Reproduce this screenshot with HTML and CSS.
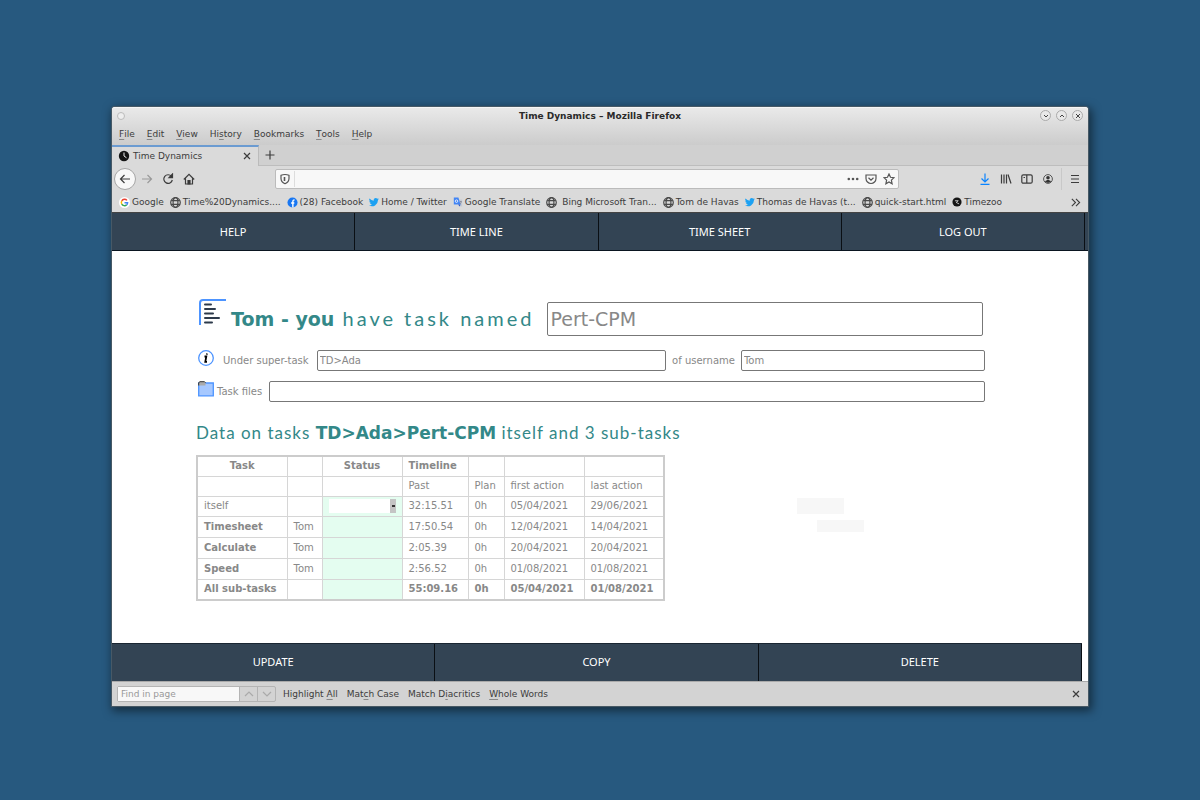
FILE: index.html
```html
<!DOCTYPE html>
<html lang="en">
<head>
    <meta charset="UTF-8">
    <meta name="viewport" content="width=device-width, initial-scale=1.0">
    <title>Time Dynamics</title>
    <link rel="stylesheet" href="styles.css">
</head>
<body>
    <!-- shared icons -->
    <svg class="sprite" aria-hidden="true">
        <symbol id="globe" viewBox="0 0 16 16">
            <g fill="none" stroke="#4a4a4a" stroke-width="1.7">
                <circle cx="8" cy="8" r="7"/>
                <ellipse cx="8" cy="8" rx="3.5" ry="7"/>
                <path d="M1.8 5.3h12.4M1.8 10.7h12.4"/>
            </g>
        </symbol>
        <symbol id="bird" viewBox="0 0 24 24">
            <path fill="#1da1f2" d="M23.6 4.9a9.600 9.600 0 0 1-2.800.8 4.900 4.900 0 0 0 2.100-2.700 9.800 9.800 0 0 1-3.100 1.200 4.900 4.900 0 0 0-8.400 4.500A13.900 13.900 0 0 1 1.300 3.600a4.900 4.900 0 0 0 1.500 6.500 4.800 4.800 0 0 1-2.200-.6 4.900 4.900 0 0 0 3.900 4.900 5 5 0 0 1-2.200.1 4.900 4.900 0 0 0 4.600 3.400A9.800 9.800 0 0 1 0 19.900a13.900 13.900 0 0 0 21.400-12.400c1-.7 1.700-1.500 2.200-2.600z"/>
        </symbol>
    </svg>

    <div class="window">
        <header class="chrome">
            <div class="titlebar">
                <span class="knob"></span>
                <span class="title">Time Dynamics – Mozilla Firefox</span>
                <div class="controls">
                    <button type="button" aria-label="Minimise"><svg viewBox="0 0 12 12"><path d="M4 5l2 2 2-2"/></svg></button>
                    <button type="button" aria-label="Maximise"><svg viewBox="0 0 12 12"><path d="M4 7l2-2 2 2"/></svg></button>
                    <button type="button" aria-label="Close"><svg viewBox="0 0 12 12"><path d="M4 4l4 4M8 4l-4 4"/></svg></button>
                </div>
            </div>
            <nav class="menubar">
                <button type="button"><u>F</u>ile</button>
                <button type="button"><u>E</u>dit</button>
                <button type="button"><u>V</u>iew</button>
                <button type="button">Hi<u>s</u>tory</button>
                <button type="button"><u>B</u>ookmarks</button>
                <button type="button"><u>T</u>ools</button>
                <button type="button"><u>H</u>elp</button>
            </nav>
            <div class="tabs">
                <div class="tab">
                    <svg viewBox="0 0 12 12"><circle cx="6" cy="6" r="5.200" fill="#161616"/><path d="M6 2.500V6l2.500 1.800" fill="none" stroke="#eee"/></svg>
                    <span>Time Dynamics</span>
                    <button type="button" aria-label="Close tab"><svg class="line" viewBox="0 0 10 10"><path d="M2 2l6 6M8 2l-6 6"/></svg></button>
                </div>
                <button class="new-tab" type="button" aria-label="New tab"><svg class="line" viewBox="0 0 10 10"><path d="M5 .5v9M.5 5h9"/></svg></button>
            </div>
            <div class="toolbar">
                <button class="back" type="button" aria-label="Back"><svg class="line" viewBox="0 0 12 12"><path d="M11 6H1.500M5.500 2l-4 4 4 4"/></svg></button>
                <button class="forward" type="button" aria-label="Forward"><svg class="line" viewBox="0 0 12 12"><path d="M1 6h9.500M6.500 2l4 4-4 4"/></svg></button>
                <button type="button" aria-label="Reload"><svg class="line" viewBox="0 0 12 12"><path d="M9.500 3.400A4.300 4.300 0 1 0 10.300 7"/><path d="M10.500 1v3.700H7z" fill="#333"/></svg></button>
                <button type="button" aria-label="Home"><svg class="line" viewBox="0 0 12 12"><path d="M.8 6.500L6 1.300l5.200 5.200M2.500 5.500V11h7V5.500"/><path d="M5 11V7.500h2V11z" fill="#333"/></svg></button>
                <div class="urlbar">
                    <svg class="line" viewBox="0 0 12 12"><path d="M6 1.500c1.500 0 2.800.3 4 .8v3.200c0 2.500-1.500 4.200-4 5.200-2.500-1-4-2.700-4-5.200V2.300c1.200-.5 2.500-.8 4-.8z"/><path d="M5.500 4v4" stroke-width="1.600"/></svg>
                    <input type="text" aria-label="Address">
                    <svg viewBox="0 0 12 12" fill="#555"><circle cx="1.800" cy="6" r="1.300"/><circle cx="6" cy="6" r="1.300"/><circle cx="10.200" cy="6" r="1.300"/></svg>
                    <svg class="line" viewBox="0 0 12 12"><path d="M1 2h10v3.500a5 5 0 0 1-10 0zM3.500 4.800L6 7.200l2.500-2.400"/></svg>
                    <svg class="line" viewBox="0 0 12 12"><path d="M6 1l1.500 3.300 3.500.4-2.600 2.400.7 3.600L6 8.900l-3.100 1.800.7-3.600L1 4.700l3.500-.4z"/></svg>
                </div>
                <div class="tools">
                    <button type="button" aria-label="Downloads"><svg class="line blue" viewBox="0 0 12 12"><path d="M6 .5v8M2.500 5.500L6 9l3.500-3.500M1.500 11.300h9"/></svg></button>
                    <button type="button" aria-label="Library"><svg class="line" viewBox="0 0 12 12"><path d="M1.500 1.500v9M4 1.500v9M6.500 1.500v9M8 1.500l3 9"/></svg></button>
                    <button type="button" aria-label="Sidebar"><svg class="line" viewBox="0 0 12 12"><rect x=".8" y="1.800" width="10.400" height="8.400" rx="1.500"/><path d="M5.800 2v8M2.500 4.500h1.500"/></svg></button>
                    <button type="button" aria-label="Account"><svg viewBox="0 0 12 12"><circle cx="6" cy="6" r="4.400" fill="none" stroke="#555"/><circle cx="6" cy="4.800" r="1.800" fill="#333"/><path d="M3 8.500c1.500-2 4.500-2 6 0-1.500 1.800-4.500 1.800-6 0z" fill="#333"/></svg></button>
                </div>
                <button class="burger" type="button" aria-label="Menu"><svg class="line" viewBox="0 0 12 12"><path d="M2 2.500h8M2 6h8M2 9.500h8"/></svg></button>
            </div>
            <nav class="bookmarks">
                <a href="#"><svg viewBox="0 0 12 12"><circle cx="6" cy="6" r="6" fill="#fff"/><g fill="none" stroke-width="1.600"><path d="M8.700 3.700A3.500 3.500 0 0 0 3 4.300" stroke="#ea4335"/><path d="M3 4.300a3.500 3.500 0 0 0 0 3.400" stroke="#fbbc05"/><path d="M3 7.700a3.500 3.500 0 0 0 5.300.9" stroke="#34a853"/><path d="M8.300 8.600A3.500 3.500 0 0 0 9.400 6.200H6" stroke="#4285f4"/></g></svg>Google</a>
                <a href="#"><svg><use href="#globe"/></svg>Time%20Dynamics....</a>
                <a href="#"><svg viewBox="0 0 12 12"><circle cx="6" cy="6" r="5.500" fill="#1877f2"/><path d="M6.400 11.500V4.600c0-1 .6-1.400 1.800-1.300M4.500 6.500h3.500" fill="none" stroke="#fff" stroke-width="1.500"/></svg>(28) Facebook</a>
                <a href="#"><svg class="small"><use href="#bird"/></svg>Home / Twitter</a>
                <a href="#"><svg class="small" viewBox="0 0 12 12"><path d="M5 3h6v8.500H8z" fill="#c4cad4"/><path d="M1 .5h5.500l2.500 8.500H1z" fill="#4285f4"/><path d="M8 11.500l1-2.500H6z" fill="#2a56c6"/><circle cx="4.200" cy="5" r="1.500" fill="none" stroke="#fff"/><path d="M8.500 5.500h2M9.500 5v1M8.500 8.500l1.500-2.500" stroke="#667" stroke-width=".6"/></svg>Google Translate</a>
                <a class="wide" href="#"><svg><use href="#globe"/></svg>Bing Microsoft Tran...</a>
                <a href="#"><svg><use href="#globe"/></svg>Tom de Havas</a>
                <a href="#"><svg class="small"><use href="#bird"/></svg>Thomas de Havas (t...</a>
                <a href="#"><svg><use href="#globe"/></svg>quick-start.html</a>
                <a href="#"><svg class="small" viewBox="0 0 12 12"><circle cx="6" cy="6" r="5.500" fill="#161616"/><path d="M3.500 4.500h4L5 6.500l3.500 1.800" fill="none" stroke="#ddd"/></svg>Timezoo</a>
                <button type="button" aria-label="More bookmarks"><svg class="line" viewBox="0 0 12 12"><path d="M2 2l4 4-4 4M6.500 2l4 4-4 4"/></svg></button>
            </nav>
        </header>

        <nav class="site-nav">
            <a href="#">HELP</a>
            <a href="#">TIME LINE</a>
            <a href="#">TIME SHEET</a>
            <a href="#">LOG OUT</a>
        </nav>

        <main>
            <div class="task-name">
                <svg viewBox="0 0 28 28">
                    <path d="M2 27V5q0-3 3-3h23" fill="none" stroke="#4d94ff" stroke-width="2"/>
                    <path d="M7 6.500h6M7 11h10M7 15.500h8M7 20h14M7 24.500h7" stroke="#2d3a4b" stroke-width="2" stroke-linecap="round"/>
                </svg>
                <h1><label for="name"><b>Tom - you</b> have task named</label></h1>
                <input type="text" id="name" value="Pert-CPM">
            </div>
            <div class="row">
                <svg viewBox="0 0 16 16">
                    <circle cx="8" cy="8" r="7.300" fill="#fff" stroke="#4d94ff" stroke-width="1.300"/>
                    <path d="M9 3.500l-.2 1.200M6.500 6.500h1.800l-1 5.300h1.700" fill="none" stroke="#000" stroke-width="1.800"/>
                </svg>
                <label class="super-label" for="super">Under super-task</label>
                <input class="super" type="text" id="super" value="TD&gt;Ada">
                <label for="user">of username</label>
                <input class="user" type="text" id="user" value="Tom">
            </div>
            <div class="row files">
                <svg viewBox="0 0 16 16">
                    <path d="M.7 2h14.600v12.800H.7z" fill="#a6c8ff" stroke="#4d94ff" stroke-width="1.300"/>
                    <path d="M.7 4.500V1.600L2 .7h4.500l1 1v2.800z" fill="#aaa"/>
                    <path d="M.7 4.500V1.600L2 .7h4.500l1 1" fill="none" stroke="#333"/>
                </svg>
                <label for="files">Task files</label>
                <input type="text" id="files">
            </div>

            <h2>Data on tasks <b>TD&gt;Ada&gt;Pert-CPM</b> itself and 3 sub-tasks</h2>

            <div class="data">
                <table>
                    <colgroup>
                        <col class="c-task"><col class="c-user"><col class="c-status"><col class="c-past"><col class="c-plan"><col class="c-date"><col class="c-date">
                    </colgroup>
                    <thead>
                        <tr><th class="mid">Task</th><th></th><th class="mid">Status</th><th>Timeline</th><th></th><th></th><th></th></tr>
                        <tr><td></td><td></td><td></td><td>Past</td><td>Plan</td><td>first action</td><td>last action</td></tr>
                    </thead>
                    <tbody>
                        <tr><td>itself</td><td></td><td class="status"><select aria-label="Status"><option></option></select></td><td>32:15.51</td><td>0h</td><td>05/04/2021</td><td>29/06/2021</td></tr>
                        <tr><th>Timesheet</th><td>Tom</td><td class="status"></td><td>17:50.54</td><td>0h</td><td>12/04/2021</td><td>14/04/2021</td></tr>
                        <tr><th>Calculate</th><td>Tom</td><td class="status"></td><td>2:05.39</td><td>0h</td><td>20/04/2021</td><td>20/04/2021</td></tr>
                        <tr><th>Speed</th><td>Tom</td><td class="status"></td><td>2:56.52</td><td>0h</td><td>01/08/2021</td><td>01/08/2021</td></tr>
                        <tr><th>All sub-tasks</th><td></td><td class="status"></td><th>55:09.16</th><th>0h</th><th>05/04/2021</th><th>01/08/2021</th></tr>
                    </tbody>
                </table>
                <div class="blanks"><span></span><span></span></div>
            </div>
        </main>

        <div class="actions">
            <button type="button">UPDATE</button>
            <button type="button">COPY</button>
            <button type="button">DELETE</button>
        </div>

        <footer class="findbar">
            <div class="find">
                <input type="text" placeholder="Find in page" aria-label="Find in page">
                <button type="button" aria-label="Previous"><svg class="line" viewBox="0 0 12 12"><path d="M2 8l4-4 4 4"/></svg></button>
                <button type="button" aria-label="Next"><svg class="line" viewBox="0 0 12 12"><path d="M2 4l4 4 4-4"/></svg></button>
            </div>
            <button type="button">Highlight <u>A</u>ll</button>
            <button type="button">Mat<u>c</u>h Case</button>
            <button type="button">Match D<u>i</u>acritics</button>
            <button type="button"><u>W</u>hole Words</button>
            <button class="close" type="button" aria-label="Close find bar"><svg class="line" viewBox="0 0 10 10"><path d="M2 2l6 6M8 2l-6 6"/></svg></button>
        </footer>
    </div>
</body>
</html>
```

FILE: styles.css
```css
* {
    box-sizing: border-box;
}
body {
    margin: 0;
    padding: 107px 112px 94px;
    min-height: 100vh;
    display: flex;
    background: #27597f;
    font-family: "DejaVu Sans", Verdana, sans-serif;
    font-size: 9px;
    color: #3c3c3c;
}
button {
    display: flex;
    align-items: center;
    justify-content: center;
    margin: 0;
    padding: 0;
    border: none;
    background: none;
    font: inherit;
    color: inherit;
    white-space: pre;
}
input {
    min-width: 0;
    font: inherit;
    color: inherit;
}
svg {
    display: block;
    flex: none;
    width: 12px;
    height: 12px;
}
.sprite {
    position: absolute;
    width: 0;
    height: 0;
}
.line {
    fill: none;
    stroke: #3c3c3c;
    stroke-width: 1.2;
}
.blue {
    stroke: #0a84ff;
}
u {
    text-decoration-color: #888;
    text-underline-offset: 2px;
}
.window {
    flex: 1;
    min-width: 0;
    display: flex;
    flex-direction: column;
    border-radius: 3px 3px 0 0;
    background: #fff;
    box-shadow: 0 0 1px 1px #4c5c68, 2px 3px 10px 2px rgba(0, 0, 0, 0.5);
}

/* browser chrome */
.chrome {
    border-radius: 3px 3px 0 0;
    background: linear-gradient(#e9e9e9, #cbcbcb 38px, #cbcbcb);
    border-top: 1px solid #f6f6f6;
}
.titlebar {
    display: grid;
    grid-template-columns: 1fr auto 1fr;
    align-items: center;
    height: 15px;
    padding: 0 5px;
}
.title {
    font-weight: bold;
    color: #2a2a2a;
}
.knob {
    width: 8px;
    height: 8px;
    border: 1px solid #bbb;
    border-radius: 50%;
    background: #eee;
}
.controls {
    display: flex;
    justify-content: flex-end;
    gap: 5px;
}
.controls button {
    width: 11px;
    height: 11px;
    border: 1px solid #aaa;
    border-radius: 50%;
    background: #e8e8e8;
}
.controls svg {
    fill: none;
    stroke: #444;
}
.menubar {
    display: flex;
    gap: 12px;
    height: 22px;
    padding: 0 7px;
}
.tabs {
    display: flex;
    height: 21px;
    background: #d0d0d0;
}
.tab {
    display: flex;
    align-items: center;
    gap: 3px;
    width: 147px;
    padding: 0 6px 1px;
    border-top: 2px solid #6b9bd1;
    border-right: 1px solid #bbb;
    background: #dadada;
}
.tab button {
    margin-left: auto;
}
.tab .line,
.new-tab .line {
    width: 10px;
    height: 10px;
}
.new-tab {
    flex: 1;
    justify-content: flex-start;
    padding: 0 6px;
    border-bottom: 1px solid #bdbdbd;
}
.toolbar {
    display: flex;
    align-items: center;
    gap: 9px;
    height: 26px;
    padding: 0 2px;
    background: #dadada;
}
.back {
    width: 22px;
    height: 22px;
    border: 1px solid #a5a5a5;
    border-radius: 50%;
    background: #f8f8f8;
}
.back + .forward {
    margin-left: -4px;
}
.forward .line {
    stroke: #999;
}
.urlbar {
    flex: 1;
    display: flex;
    align-items: center;
    gap: 6px;
    height: 20px;
    margin: 0 71px;
    padding: 0 3px;
    border: 1px solid #bbb;
    border-radius: 2px;
    background: #f8f8f8;
}
.urlbar .line {
    stroke: #555;
}
.urlbar input {
    flex: 1;
    height: 16px;
    margin-left: -3px;
    padding: 0 4px;
    border: none;
    border-left: 1px solid #ddd;
    background: none;
}
.tools {
    display: flex;
    gap: 9px;
    margin-right: -2px;
}
.burger {
    height: 22px;
    padding: 0 5px 0 7px;
    border-left: 1px solid #c8c8c8;
}
.bookmarks {
    display: flex;
    align-items: center;
    gap: 6px;
    height: 21px;
    padding: 0 7px;
    background: #dadada;
    border-bottom: 1px solid #444;
}
.bookmarks a {
    display: flex;
    align-items: center;
    gap: 2px;
    color: inherit;
    text-decoration: none;
    white-space: nowrap;
}
.bookmarks svg {
    width: 11px;
    height: 11px;
}
.bookmarks .small {
    width: 10px;
    height: 10px;
}
.bookmarks .wide {
    gap: 5px;
}
.bookmarks button {
    margin-left: auto;
}

/* page */
.site-nav {
    display: grid;
    grid-template-columns: repeat(4, 1fr);
    padding-right: 3px;
    background: #334454;
    border-bottom: 1px solid #0a1520;
}
.site-nav a,
.actions button {
    height: 37px;
    line-height: 37px;
    border-right: 1px solid #0a0f14;
    background: #334454;
    font-family: "Noto Sans", sans-serif;
    font-size: 11px;
    text-align: center;
    text-decoration: none;
    color: #fff;
}
main {
    flex: 1;
    padding: 47px 103px 42px 84px;
    font-size: 10px;
    color: #888;
}
main input {
    height: 21px;
    padding: 0 2px;
    border: 1px solid #777;
    border-radius: 2px;
    background: #fff;
}
h1,
h2 {
    margin: 0;
    font-family: Lato, sans-serif;
    font-weight: 400;
    color: #388;
    white-space: nowrap;
}
h1 b,
h2 b {
    font-family: "DejaVu Sans", Verdana, sans-serif;
    font-weight: bold;
    letter-spacing: 0;
}
h1 {
    padding-bottom: 2px;
    font-size: 20px;
    line-height: 24px;
    letter-spacing: 3px;
}
h1 b {
    font-size: 19px;
}
h2 {
    margin: 20px 0 11px;
    font-size: 17px;
    line-height: 21px;
    letter-spacing: 1px;
}
.task-name {
    display: flex;
    align-items: center;
    gap: 5px;
    padding: 4px 2px 0;
}
.task-name svg {
    align-self: flex-start;
    width: 28px;
    height: 28px;
    margin-top: -4px;
}
.task-name input {
    flex: 1;
    height: 34px;
    margin-left: 8px;
    font-size: 19px;
}
.row {
    display: flex;
    align-items: center;
    gap: 6px;
    margin-top: 14px;
}
.row svg {
    align-self: flex-start;
    width: 16px;
    height: 16px;
    margin-left: 2px;
}
.super-label {
    margin: 0 2px 0 3px;
}
.super {
    flex: 352;
}
.user {
    flex: 244;
}
.files {
    gap: 3px;
    margin-top: 10px;
}
.files input {
    flex: 1;
    margin-left: 4px;
}
.data {
    display: flex;
}
table {
    width: 467px;
    height: 146px;
    table-layout: fixed;
    border-collapse: collapse;
    border: 2px solid #ccc;
}
th,
td {
    height: 20px;
    padding: 0 6px;
    border: 1px solid #d6d6d6;
    line-height: 14px;
    text-align: left;
    white-space: nowrap;
}
.mid {
    text-align: center;
}
.c-task {
    width: 90px;
}
.c-user {
    width: 35px;
}
.c-status,
.c-date {
    width: 80px;
}
.c-past {
    width: 66px;
}
.c-plan {
    width: 36px;
}
.status {
    background: #e4fdf0;
}
select {
    appearance: none;
    display: block;
    width: 67px;
    height: 14px;
    border: none;
    border-radius: 0;
    background: linear-gradient(#333, #333) 63px 6px / 3px 2px no-repeat, linear-gradient(#c4c4c4, #c4c4c4) right / 6px 14px no-repeat, #fff;
}
.blanks {
    padding: 43px 0 0 132px;
}
.blanks span {
    display: block;
    width: 47px;
    height: 16px;
    background: #f7f7f7;
}
.blanks span + span {
    height: 12px;
    margin: 6px 0 0 20px;
}
.actions {
    display: grid;
    grid-template-columns: repeat(3, 1fr);
    margin-right: 6px;
    border-top: 1px solid #1a2632;
}
.actions button {
    padding-bottom: 2px;
}

/* find bar */
.findbar {
    display: flex;
    align-items: center;
    gap: 9px;
    height: 25px;
    padding: 0 7px 0 5px;
    border-top: 1px solid #aaa;
    background: #d3d3d3;
}
.find {
    display: flex;
    margin-right: -2px;
    border: 1px solid #b4b4b4;
    border-radius: 2px;
}
.find input {
    width: 121px;
    height: 14px;
    padding: 0 3px;
    border: none;
    background: #f8f8f8;
}
.find input::placeholder {
    color: #999;
}
.find button {
    width: 18px;
    border-left: 1px solid #b4b4b4;
}
.find .line {
    stroke: #aaa;
}
.close {
    margin-left: auto;
}
.close .line {
    width: 10px;
    height: 10px;
}
```
